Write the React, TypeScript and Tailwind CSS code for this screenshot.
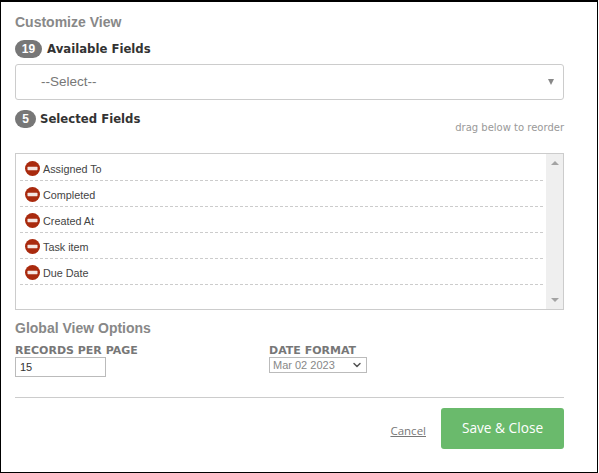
import React from 'react';
import { ChevronDown } from 'lucide-react';

const selectedFields = ['Assigned To', 'Completed', 'Created At', 'Task item', 'Due Date'];

const RemoveIcon = () => (
  <svg width="15" height="15" viewBox="0 0 15 15" className="shrink-0">
    <circle cx="7.5" cy="7.5" r="7.5" fill="#a92a0e" />
    <rect x="2.5" y="5.8" width="10" height="3.4" rx="0.6" fill="#f4e6e2" />
  </svg>
);

const Badge = ({ children, wide }: { children: React.ReactNode; wide?: boolean }) => (
  <span
    className={`flex h-[18px] items-center justify-center rounded-full bg-[#777] text-[12px] font-bold text-white font-['Liberation_Sans',sans-serif] ${
      wide ? 'w-[27px]' : 'w-[21px]'
    }`}
  >
    {children}
  </span>
);

const App = () => {
  return (
    <div className="h-[473px] w-[599px] bg-white font-['Liberation_Sans',sans-serif]">
      <div className="h-[473px] w-[598px] border border-t-2 border-black px-[14px] pt-[8px]">
        <h2 className="h-[24px] text-[14px] leading-[24px] font-bold text-[#888]">Customize View</h2>

        <div className="mt-[6px] flex h-[18px] items-center gap-[5px]">
          <Badge wide>19</Badge>
          <span className="pt-[1px] font-['DejaVu_Sans',sans-serif] text-[11.7px] font-bold text-[#333]">Available Fields</span>
        </div>

        <div className="mt-[6px] flex h-[36px] w-[549px] items-center justify-between rounded-[3px] border border-[#ccc] pr-[9px] pl-[25px]">
          <span className="text-[13.5px] text-[#777]">--Select--</span>
          <span className="h-0 w-0 border-x-[3.5px] border-t-[6px] border-x-transparent border-t-[#888]" />
        </div>

        <div className="mt-[10px] flex h-[18px] items-center gap-[4px]">
          <Badge>5</Badge>
          <span className="pt-[1px] font-['DejaVu_Sans',sans-serif] text-[11.7px] font-bold text-[#333]">Selected Fields</span>
        </div>

        <p className="mt-[-6px] w-[549px] text-right font-['DejaVu_Sans',sans-serif] text-[10px] leading-[12px] text-[#999]">
          drag below to reorder
        </p>

        <div className="mt-[19px] flex h-[157px] w-[549px] border border-[#ccc]">
          <ul className="flex-1 pt-[1px] pl-[4px]">
            {selectedFields.map((field) => (
              <li
                key={field}
                className="flex h-[26px] w-[523px] items-center gap-[3px] border-b border-dashed border-[#ccc] pt-[2px] pl-[5px] text-[10.8px] text-[#444]"
              >
                <RemoveIcon />
                <span className="pt-[2px]">{field}</span>
              </li>
            ))}
          </ul>
          <div className="flex w-[17px] flex-col items-center justify-between bg-[#efefef] pt-[7px] pb-[7px]">
            <span className="h-0 w-0 border-x-[4px] border-b-[4px] border-x-transparent border-b-[#a3a3a3]" />
            <span className="h-0 w-0 border-x-[4px] border-t-[4px] border-x-transparent border-t-[#a3a3a3]" />
          </div>
        </div>

        <h2 className="mt-[9px] h-[18px] text-[14px] leading-[18px] font-bold text-[#888]">Global View Options</h2>

        <div className="mt-[8px] flex">
          <div className="w-[254px]">
            <div className="font-['DejaVu_Sans',sans-serif] text-[11px] leading-[11px] font-bold text-[#777]">RECORDS PER PAGE</div>
            <div className="mt-[1px] flex h-[20px] w-[91px] items-center border border-[#bbb] pl-[4px] text-[11px] text-[#333]">15</div>
          </div>
          <div>
            <div className="font-['DejaVu_Sans',sans-serif] text-[11px] leading-[11px] font-bold text-[#777]">DATE FORMAT</div>
            <div className="mt-[1px] flex h-[16px] w-[98px] items-center justify-between border border-[#bbb] pr-[3px] pl-[3px] text-[11px] text-[#888]">
              Mar 02 2023
              <ChevronDown size={12} strokeWidth={3} className="text-[#555]" />
            </div>
          </div>
        </div>

        <hr className="mt-[20px] w-[549px] border-t border-[#ccc]" />

        <div className="mt-[10px] flex w-[549px] items-center justify-end gap-[15px]">
          <a className="mt-[4px] font-['Open_Sans',sans-serif] text-[11.5px] text-[#777] underline">Cancel</a>
          <button className="h-[41px] w-[123px] rounded-[3px] bg-[#6aba6c] font-['Open_Sans',sans-serif] text-[13.7px] text-white">
            Save &amp; Close
          </button>
        </div>
      </div>
    </div>
  );
};

export default App;
